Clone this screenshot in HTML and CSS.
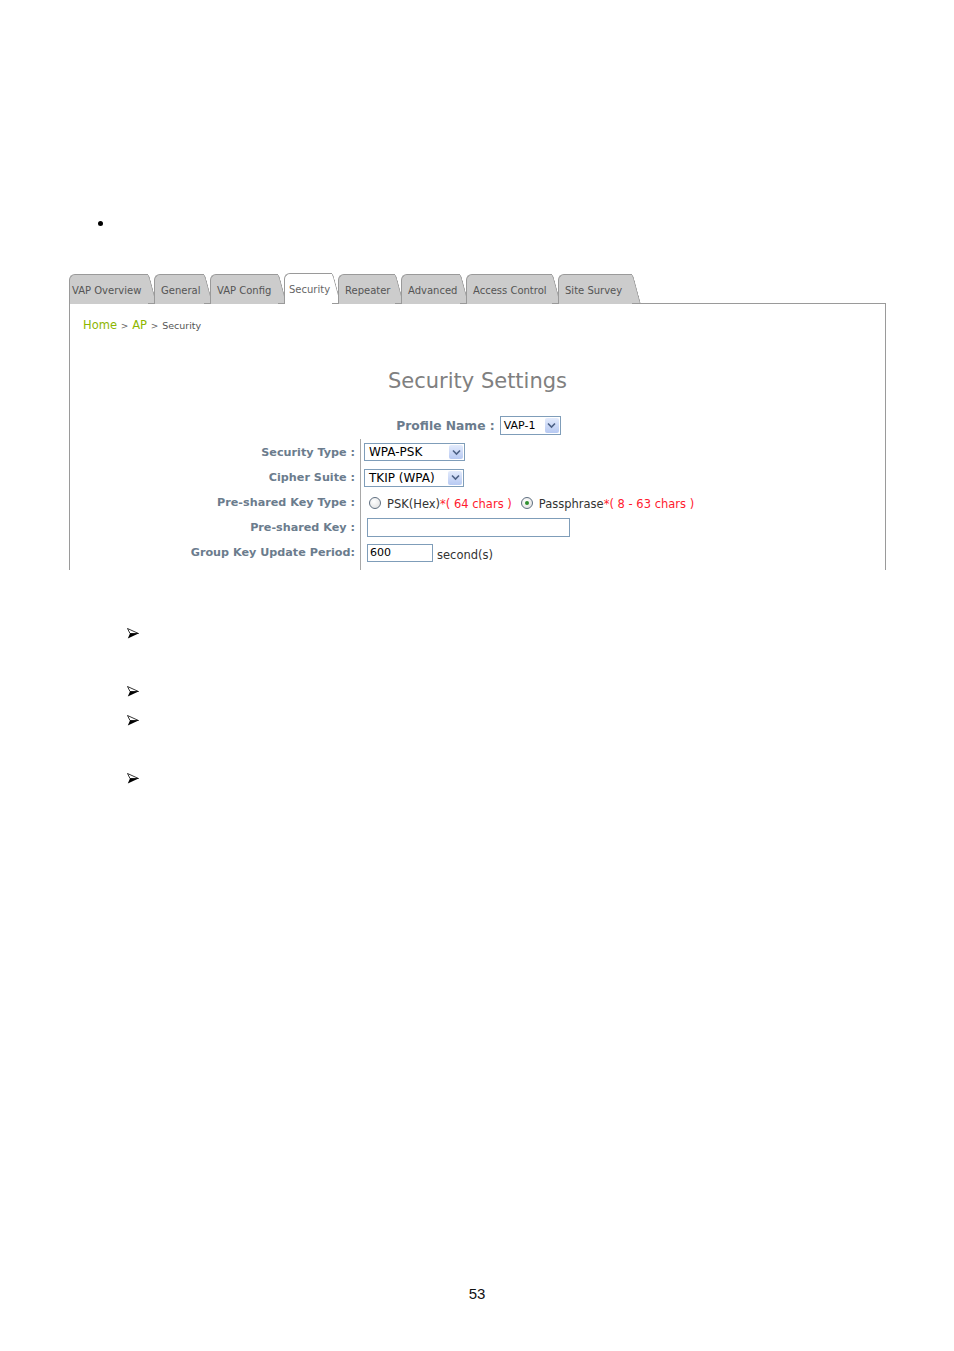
FILE: index.html
```html
<!DOCTYPE html>
<html>
<head>
<meta charset="utf-8">
<title>Security Settings</title>
<link rel="stylesheet" href="styles.css">
</head>
<body>
<div class="page">
  <div class="bullet-row"><span class="dot"></span></div>

  <div class="shot">
    <div class="tabs">
      <div class="tab first t-overview"><span>VAP Overview</span></div>
      <div class="tab t-general"><span>General</span></div>
      <div class="tab t-config"><span>VAP Config</span></div>
      <div class="tab active t-security"><span>Security</span></div>
      <div class="tab t-repeater"><span>Repeater</span></div>
      <div class="tab t-advanced"><span>Advanced</span></div>
      <div class="tab t-access"><span>Access Control</span></div>
      <div class="tab t-survey"><span>Site Survey</span></div>
    </div>
    <div class="panel">
      <div class="crumb"><span class="link">Home</span> <span class="sep">&gt;</span> <span class="link">AP</span> <span class="sep">&gt;</span> <span class="here">Security</span></div>
      <h1 class="title">Security Settings</h1>
      <div class="profile">
        <span class="plabel">Profile Name :</span>
        <span class="select sel-profile"><span class="val">VAP-1</span><span class="btn"><svg viewBox="0 0 9 7" width="9" height="7"><path d="M1 1.5 L4.5 5 L8 1.5" fill="none" stroke="#4d6185" stroke-width="1.6"/></svg></span></span>
      </div>
      <div class="form">
        <div class="lbl">Security Type :</div>
        <div class="cell"><span class="select sel-wide"><span class="val">WPA-PSK</span><span class="btn"><svg viewBox="0 0 9 7" width="9" height="7"><path d="M1 1.5 L4.5 5 L8 1.5" fill="none" stroke="#4d6185" stroke-width="1.6"/></svg></span></span></div>

        <div class="lbl">Cipher Suite :</div>
        <div class="cell"><span class="select sel-wide2"><span class="val">TKIP (WPA)</span><span class="btn"><svg viewBox="0 0 9 7" width="9" height="7"><path d="M1 1.5 L4.5 5 L8 1.5" fill="none" stroke="#4d6185" stroke-width="1.6"/></svg></span></span></div>

        <div class="lbl">Pre-shared Key Type :</div>
        <div class="cell radios">
          <span class="radio"></span><span class="opt">PSK(Hex)<span class="red">*( 64 chars )</span></span>
          <span class="radio checked"></span><span class="opt">Passphrase<span class="red">*( 8 - 63 chars )</span></span>
        </div>

        <div class="lbl">Pre-shared Key :</div>
        <div class="cell"><span class="input input-key"></span></div>

        <div class="lbl">Group Key Update Period:</div>
        <div class="cell"><span class="input input-period">600</span><span class="unit">second(s)</span></div>

        <div class="lbl filler"></div>
        <div class="cell filler"></div>
      </div>
    </div>
  </div>

  <ul class="arrows">
    <li class="a1"><svg class="arrow" viewBox="0 0 12 11" width="12" height="11"><path d="M0.5 0.5 L11.5 5.5 L3 5.5 Z" fill="#fff" stroke="#000" stroke-width="0.8" stroke-linejoin="round"/><path d="M3 5.5 L11.5 5.5 L0.8 10.5 Z" fill="#000"/></svg></li>
    <li class="a2"><svg class="arrow" viewBox="0 0 12 11" width="12" height="11"><path d="M0.5 0.5 L11.5 5.5 L3 5.5 Z" fill="#fff" stroke="#000" stroke-width="0.8" stroke-linejoin="round"/><path d="M3 5.5 L11.5 5.5 L0.8 10.5 Z" fill="#000"/></svg></li>
    <li class="a3"><svg class="arrow" viewBox="0 0 12 11" width="12" height="11"><path d="M0.5 0.5 L11.5 5.5 L3 5.5 Z" fill="#fff" stroke="#000" stroke-width="0.8" stroke-linejoin="round"/><path d="M3 5.5 L11.5 5.5 L0.8 10.5 Z" fill="#000"/></svg></li>
    <li class="a4"><svg class="arrow" viewBox="0 0 12 11" width="12" height="11"><path d="M0.5 0.5 L11.5 5.5 L3 5.5 Z" fill="#fff" stroke="#000" stroke-width="0.8" stroke-linejoin="round"/><path d="M3 5.5 L11.5 5.5 L0.8 10.5 Z" fill="#000"/></svg></li>
  </ul>

  <div class="pagenum">53</div>
</div>
</body>
</html>
```

FILE: styles.css
```css
html {
  margin: 0;
  padding: 0;
  background: #ffffff;
}

body {
  margin: 0;
  padding: 0;
}

.page {
  width: 954px;
  height: 1351px;
  overflow: hidden;
  font-family: "DejaVu Sans", Verdana, sans-serif;
  color: #000;
}

.bullet-row {
  height: 274px;
  box-sizing: border-box;
  padding: 221px 0 0 98px;
}

.dot {
  display: block;
  width: 5px;
  height: 5px;
  border-radius: 50%;
  background: #000;
}

.shot {
  margin-left: 69px;
  width: 817px;
}

/* Tabs */
.tabs {
  display: flex;
  align-items: flex-end;
  height: 30px;
  margin-bottom: -1px;
}

.tab {
  position: relative;
  box-sizing: border-box;
  flex: none;
  height: 30px;
  padding: 0 0 0 6px;
  margin-right: 6px;
  background: #cccccc;
  border-top: 1px solid #9a9a9a;
  border-left: 1px solid #9a9a9a;
  border-top-left-radius: 6px;
  font-size: 10px;
  line-height: 30px;
  color: #555;
  white-space: nowrap;
}

.tab.first {
  padding-left: 2px;
}

.t-overview { width: 79px; }
.t-general { width: 50px; }
.t-config { width: 68px; }
.t-security { width: 48px; padding-left: 4px; }
.t-repeater { width: 57px; }
.t-advanced { width: 59px; }
.t-access { width: 86px; }
.t-survey { width: 74px; }

.tab::after {
  content: "";
  position: absolute;
  z-index: -1;
  top: -1px;
  bottom: 0;
  right: -1px;
  width: 12px;
  background: #cccccc;
  border-top: 1px solid #9a9a9a;
  border-right: 1px solid #9a9a9a;
  border-top-right-radius: 4px;
  transform: skewX(15deg);
  transform-origin: top right;
}

.tab span {
  position: relative;
  top: 1px;
}

.tab.active {
  height: 31px;
  background: #ffffff;
  color: #666;
}

.tab.active::after {
  background: #ffffff;
}

/* Panel */
.panel {
  box-sizing: border-box;
  height: 267px;
  border-top: 1px solid #9a9a9a;
  border-left: 1px solid #9a9a9a;
  border-right: 1px solid #9a9a9a;
  display: flex;
  flex-direction: column;
  overflow: hidden;
}

.crumb {
  margin: 14px 0 0 13px;
  height: 14px;
  line-height: 14px;
  font-size: 12px;
  color: #666;
}

.crumb .link {
  color: #8db600;
  font-size: 11.5px;
}

.crumb .sep {
  font-size: 9px;
  color: #666;
}

.crumb .here {
  font-size: 9.5px;
  color: #555;
}

.title {
  margin: 36px 0 0 0;
  height: 26px;
  line-height: 26px;
  text-align: center;
  font-size: 21px;
  font-weight: normal;
  color: #808080;
}

.profile {
  margin-top: 21px;
  height: 20px;
  display: flex;
  justify-content: center;
  align-items: center;
  gap: 5px;
  padding-left: 2px;
}

.plabel {
  font-size: 12.3px;
  font-weight: bold;
  color: #6b7c8d;
  position: relative;
  top: 1px;
}

/* Select */
.select {
  display: inline-flex;
  align-items: stretch;
  box-sizing: border-box;
  border: 1px solid #7f9db9;
  background: #fff;
  height: 19px;
}

.select .val {
  flex: 1;
  padding-left: 3px;
  font-size: 11px;
  line-height: 17px;
  color: #000;
  white-space: nowrap;
}

.select .btn {
  width: 14px;
  margin: 1px;
  border-radius: 2px;
  background: linear-gradient(#e3ebfc, #b7c9f2);
  display: flex;
  align-items: center;
  justify-content: center;
}

.sel-profile { width: 61px; }
.sel-wide { width: 101px; height: 18px; }
.sel-wide2 { width: 100px; height: 18px; }
.sel-wide .val, .sel-wide2 .val {
  line-height: 16px;
  font-size: 12px;
  padding-left: 4px;
}

/* Form */
.form {
  flex: 1;
  margin-top: 4px;
  display: grid;
  grid-template-columns: 291px 1fr;
  grid-template-rows: 26px 25px 25px 24px 27px 1fr;
}

.lbl {
  border-right: 1px solid #a8a8a8;
  padding-right: 5px;
  text-align: right;
  font-size: 11.2px;
  font-weight: bold;
  color: #6b7c8d;
  display: flex;
  align-items: center;
  justify-content: flex-end;
  white-space: nowrap;
}

.cell {
  padding-left: 3px;
  display: flex;
  align-items: center;
  font-size: 11px;
  white-space: nowrap;
}

.radios {
  padding-left: 8px;
}

.radio {
  box-sizing: border-box;
  width: 12px;
  height: 12px;
  border-radius: 50%;
  border: 1px solid #5f6f80;
  background: radial-gradient(circle at 40% 35%, #ffffff, #dcdcdc);
  margin-right: 6px;
  display: inline-flex;
  align-items: center;
  justify-content: center;
}

.radio.checked::before {
  content: "";
  width: 4px;
  height: 4px;
  border-radius: 50%;
  background: #2f8f2f;
}

.opt {
  color: #333;
  font-size: 11.5px;
  margin-right: 9px;
  position: relative;
  top: 1px;
}

.red {
  color: #ff1a2e;
}

.input {
  box-sizing: border-box;
  display: inline-block;
  border: 1px solid #7f9db9;
  background: #fff;
  margin-left: 3px;
  font-size: 11px;
  line-height: 16px;
  padding-left: 2px;
}

.input-key {
  width: 203px;
  height: 19px;
}

.input-period {
  width: 66px;
  height: 18px;
}

.unit {
  margin-left: 4px;
  font-size: 11.5px;
  color: #333;
  position: relative;
  top: 2px;
}

/* Arrows list */
.arrows {
  list-style: none;
  margin: 0;
  padding: 0 0 0 127px;
}

.arrows li {
  height: 14px;
  display: flex;
  align-items: center;
}

.a1 { margin-top: 56px; }
.a2 { margin-top: 44px; }
.a3 { margin-top: 15px; }
.a4 { margin-top: 44px; }

.pagenum {
  margin-top: 500px;
  text-align: center;
  font-family: "Liberation Sans", Arial, sans-serif;
  font-size: 15px;
  line-height: 18px;
  color: #111;
}
```
